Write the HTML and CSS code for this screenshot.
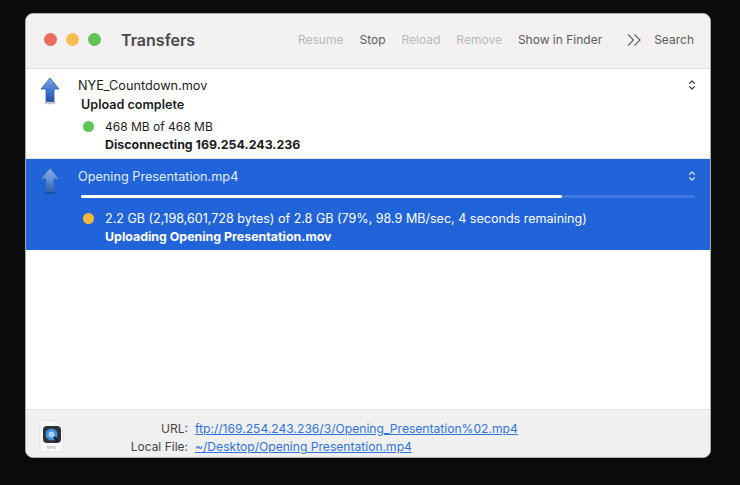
FILE: index.html
```html
<!DOCTYPE html>
<html lang="en">
<head>
<meta charset="utf-8">
<title>Transfers</title>
<link rel="stylesheet" href="styles.css">
</head>
<body>
<svg class="defs" width="0" height="0" aria-hidden="true">
  <defs>
    <linearGradient id="arrowFill" x1="0" y1="0" x2="0" y2="1">
      <stop offset="0" stop-color="#7fa6e8"/>
      <stop offset="0.55" stop-color="#3f74cf"/>
      <stop offset="1" stop-color="#23509f"/>
    </linearGradient>
    <linearGradient id="arrowFillSel" x1="0" y1="0" x2="0" y2="1">
      <stop offset="0" stop-color="#8fb0e6"/>
      <stop offset="0.55" stop-color="#5c8bd6"/>
      <stop offset="1" stop-color="#2e5aa8"/>
    </linearGradient>
    <symbol id="chev" viewBox="0 0 8 12">
      <path d="M1.500 4.400 4 2l2.500 2.400M1.500 7.600 4 10l2.500-2.400" fill="none" stroke="currentColor" stroke-width="1.200" stroke-linecap="round" stroke-linejoin="round"/>
    </symbol>
  </defs>
</svg>
<main class="window">
  <header class="toolbar">
    <div class="lights">
      <span class="light red"></span>
      <span class="light yellow"></span>
      <span class="light green"></span>
    </div>
    <h1 class="title">Transfers</h1>
    <nav class="actions">
      <span class="action off">Resume</span>
      <span class="action">Stop</span>
      <span class="action off">Reload</span>
      <span class="action off">Remove</span>
      <span class="action">Show in Finder</span>
      <svg class="more" width="14" height="14" viewBox="0 0 14 14"><path d="M1 1.500 6.500 7 1 12.500M7.500 1.500 13 7l-5.500 5.500" fill="none" stroke="#5f5f5f" stroke-width="1.100"/></svg>
      <span class="action search">Search</span>
    </nav>
  </header>
  <section class="list">
    <article class="row done">
      <svg class="arrow" width="20" height="28" viewBox="0 0 20 28"><ellipse cx="10" cy="25.500" rx="6" ry="1.800" fill="#000" opacity=".22"/><path d="M10 1 19 12h-5v12.500H6V12H1z" fill="url(#arrowFill)" stroke="#2c5cb0" stroke-width=".8"/></svg>
      <div class="body">
        <div class="name-line"><span class="name">NYE_Countdown.mov</span><svg class="chev" width="8" height="12"><use href="#chev"/></svg></div>
        <div class="state">Upload complete</div>
        <div class="detail"><span class="dot ok"></span><span>468 MB of 468 MB</span></div>
        <div class="sub">Disconnecting 169.254.243.236</div>
      </div>
    </article>
    <article class="row active">
      <svg class="arrow" width="20" height="28" viewBox="0 0 20 28"><ellipse cx="10" cy="25.500" rx="6" ry="1.800" fill="#000" opacity=".2"/><path d="M10 1 19 12h-5v12.500H6V12H1z" fill="url(#arrowFillSel)" stroke="#3b69b8" stroke-width=".8"/></svg>
      <div class="body">
        <div class="name-line"><span class="name">Opening Presentation.mp4</span><svg class="chev" width="8" height="12"><use href="#chev"/></svg></div>
        <div class="progress"><div class="progress-fill" style="width:78.300%"></div></div>
        <div class="detail"><span class="dot busy"></span><span>2.2 GB (2,198,601,728 bytes) of 2.8 GB (79%, 98.9 MB/sec, 4 seconds remaining)</span></div>
        <div class="sub">Uploading Opening Presentation.mov</div>
      </div>
    </article>
  </section>
  <footer class="info">
    <svg class="file" width="25" height="32" viewBox="0 0 25 32">
      <path d="M1 .5h16l7 7v24H1z" fill="#f7f7f7" stroke="#dcdcdc" stroke-width=".6"/>
      <rect x="4" y="6" width="18" height="17" rx="4" fill="#2f3338"/>
      <circle cx="12.500" cy="14.500" r="6" fill="#3f8fe0"/>
      <circle cx="12.500" cy="14.500" r="3" fill="#a9d4f5"/>
      <path d="M15 17l4 4" stroke="#1d2024" stroke-width="2"/>
      <text x="12.500" y="29" text-anchor="middle" class="file-label">MP4</text>
    </svg>
    <dl class="links">
      <dt>URL:</dt>
      <dd><a href="#">ftp://169.254.243.236/3/Opening_Presentation%02.mp4</a></dd>
      <dt>Local File:</dt>
      <dd><a href="#">~/Desktop/Opening Presentation.mp4</a></dd>
    </dl>
  </footer>
</main>
</body>
</html>
```
FILE: styles.css
```css
* { box-sizing: border-box; }
html, body { margin: 0; height: 100%; }
body {
  background: #0b0b0b;
  padding: 13px 29px 27px 25px;
  font-family: Inter, "Liberation Sans", sans-serif;
  font-size: 12px;
  color: #1c1c1c;
}
.defs { position: absolute; }
.window {
  height: 445px;
  display: flex;
  flex-direction: column;
  background: #fff;
  border-radius: 8px;
  overflow: hidden;
  border: 1px solid #a9a9a9;
}
.toolbar {
  height: 55px;
  flex: none;
  display: flex;
  align-items: center;
  padding: 0 16px 3px 18px;
  background: #f3f1f2;
  border-bottom: 1px solid #e0dfdf;
}
.lights { display: flex; gap: 9px; }
.light { width: 13px; height: 13px; border-radius: 50%; }
.red { background: #ee6a5f; }
.yellow { background: #f5bd4f; }
.green { background: #61c454; }
.title {
  margin: 0 0 0 20px;
  font-size: 16px;
  font-weight: 600;
  color: #4a4a4a;
}
.actions { margin-left: auto; display: flex; align-items: center; }
.action { color: #5c5c5c; margin-left: 16px; }
.action.off { color: #b9b9b9; }
.more { margin-left: 25px; }
.action.search { margin-left: 13px; }
.list { flex: 1; min-height: 0; font-size: 12.500px; }
.row { display: flex; padding: 0 13px 0 14px; }
.row.done { height: 90px; padding-top: 8px; border-bottom: 1px solid #e4e4e4; }
.row.active { height: 91px; padding-top: 9px; background: #2163d9; color: #fff; }
.arrow { flex: none; margin-right: 18px; }
.active .arrow { margin-top: -1px; }
.active .name-line { color: #e3ecfb; }
.body { flex: 1; min-width: 0; }
.name { font-size: 12.700px; }
.name-line { height: 16px; display: flex; align-items: center; justify-content: space-between; }
.chev { color: #3a3a3a; margin-right: 1px; }
.active .chev { color: #dfe8fa; }
.state { margin: 4px 0 0 3px; font-weight: 600; height: 16px; line-height: 16px; font-size: 12.600px; }
.detail { display: flex; align-items: center; height: 16px; margin: 5px 0 0 5px; gap: 11px; }
.done .detail { font-size: 12px; }
.active .detail { margin-top: 12px; font-size: 12.550px; }
.dot { width: 11px; height: 11px; border-radius: 50%; flex: none; }
.dot.ok { background: #5fc558; }
.dot.busy { background: #f6b83f; }
.sub { margin: 3px 0 0 27px; height: 16px; line-height: 16px; font-weight: 700; font-size: 12.400px; }
.progress { height: 3px; margin: 11px 2px 0 3px; background: #3f78e0; border-radius: 2px; }
.progress-fill { height: 100%; background: #fff; border-radius: 2px; }
.info {
  height: 48px;
  flex: none;
  display: flex;
  align-items: flex-start;
  padding: 10px 0 0 13px;
  background: #f1f0f0;
  border-top: 1px solid #e4e4e4;
}
.file { flex: none; }
.file-label { font-size: 4px; fill: #9a9a9a; }
.links {
  margin: 0;
  display: grid;
  grid-template-columns: 124px auto;
  column-gap: 7px;
  line-height: 18px;
  font-size: 12.100px;
}
.links dt { text-align: right; color: #444; font-size: 12px; }
.links dd { margin: 0; }
.links a { color: #2f74de; }
```
